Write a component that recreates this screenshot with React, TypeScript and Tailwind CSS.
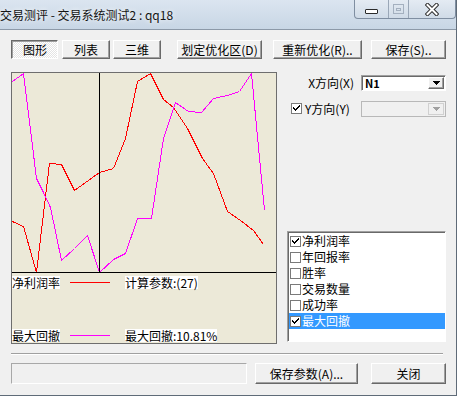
import React from "react";

const red: [number, number][] = [
  [0, 148], [11, 153], [24, 199], [31, 140], [37, 90], [49, 91], [62, 117], [87, 99], [101, 95],
  [113, 65], [125, 8], [138, 0], [151, 26], [161, 34], [175, 55], [190, 85], [201, 100],
  [215, 138], [228, 147], [241, 157], [251, 171],
];
const mag: [number, number][] = [
  [0, 8], [11, 0], [24, 105], [31, 119], [38, 134], [49, 187], [62, 175], [75, 162], [87, 199],
  [101, 186], [113, 180], [125, 145], [139, 145], [151, 65], [163, 29], [176, 38], [189, 39],
  [201, 25], [215, 22], [227, 18], [239, 0], [252, 137],
];
const pts = (a: [number, number][]) => a.map(([x, y]) => `${x + 0.5},${y + 0.5}`).join(" ");

function Btn({ children, className = "" }: { children: React.ReactNode; className?: string }) {
  return (
    <div
      className={
        "flex items-center justify-center bg-[#f0f0f0] border border-t-white border-l-white border-r-[#696969] border-b-[#696969] shadow-[inset_-1px_-1px_0_#a0a0a0] text-[12px] leading-none text-black whitespace-nowrap " +
        className
      }
    >
      {children}
    </div>
  );
}

function Check({ on }: { on: boolean }) {
  return (
    <div className="w-[11px] h-[11px] shrink-0 bg-white border border-[#7a7a7a] flex items-center justify-center">
      {on && (
        <svg width="9" height="9" viewBox="0 0 9 9" shapeRendering="crispEdges">
          <path d="M1 3h1v1h1v1h1v-1h1v-1h1v-1h1v-1h1v2h-1v1h-1v1h-1v1h-1v1h-1v-1h-1v-1h-1z" fill="#000" />
        </svg>
      )}
    </div>
  );
}

function Arrow({ color }: { color: string }) {
  return (
    <svg width="7" height="4" viewBox="0 0 7 4" shapeRendering="crispEdges">
      <path d="M0 0h7v1h-1v1h-1v1h-1v1h-1v-1h-1v-1h-1v-1h-1z" fill={color} />
    </svg>
  );
}

const items = [
  { t: "净利润率", on: true },
  { t: "年回报率", on: false },
  { t: "胜率", on: false },
  { t: "交易数量", on: false },
  { t: "成功率", on: false },
  { t: "最大回撤", on: true, sel: true },
];

export default function App() {
  return (
    <div className="w-[457px] h-[396px] overflow-hidden bg-[#f0f0f0] flex flex-col border-r border-b border-[#5f6b78] font-['Noto_Sans_CJK_SC',sans-serif] text-[12px] text-black">
      {/* title bar */}
      <div className="h-[30px] shrink-0 flex items-start bg-[linear-gradient(to_bottom,#dbe5f0,#c8d6e5)] border-b border-[#8c99a8]">
        <div className="h-[29px] flex items-center text-[12px] text-[#141414] whitespace-nowrap [text-shadow:0_0_5px_#ffffff]">
          交易测评 - 交易系统测试2 : qq18
        </div>
        <div className="ml-auto mr-0 flex h-[19px] border border-t-0 border-[#7f8ea1] rounded-b-[4px] overflow-hidden bg-[linear-gradient(to_bottom,#e4ebf3,#d0dbe7)]">
          <div className="w-[34px] flex items-center justify-center border-r border-[#9aa7b7]">
            <div className="w-[13px] h-[5px] bg-white border border-[#2b2b2b] rounded-[1px] mt-[4px]" />
          </div>
          <div className="w-[20px] flex items-center justify-center border-r border-[#9aa7b7]">
            <div className="w-[11px] h-[10px] border border-[#a4b0bf] flex items-center justify-center">
              <div className="w-[5px] h-[3px] border border-[#a4b0bf]" />
            </div>
          </div>
          <div className="w-[46px] flex items-center justify-center">
            <svg width="14" height="13" viewBox="0 0 14 13">
              <path d="M2.5 2 L11.5 11 M11.5 2 L2.5 11" stroke="#2e2e2e" strokeWidth="4" strokeLinecap="square" />
              <path d="M2.5 2 L11.5 11 M11.5 2 L2.5 11" stroke="#ffffff" strokeWidth="2" strokeLinecap="square" />
            </svg>
          </div>
        </div>
      </div>

      {/* client */}
      <div className="flex flex-col pl-[11px] pt-[10px]">
        {/* row 1 */}
        <div className="flex h-[19px]">
          <div className="w-[47px] flex items-center justify-center border border-t-[#696969] border-l-[#696969] border-r-white border-b-white shadow-[inset_1px_1px_0_#a0a0a0] bg-[repeating-conic-gradient(#ffffff_0%_25%,#e4e4e4_0%_50%)] bg-size-[2px_2px] leading-none pt-[1px] pl-[1px]">
            图形
          </div>
          <Btn className="w-[48px] ml-[4px]">列表</Btn>
          <Btn className="w-[48px] ml-[3px]">三维</Btn>
          <Btn className="w-[85px] ml-[16px]">划定优化区(D)</Btn>
          <Btn className="w-[89px] ml-[11px]">重新优化(R)..</Btn>
          <Btn className="w-[75px] ml-[9px]">保存(S)..</Btn>
        </div>

        {/* main */}
        <div className="flex mt-[13px]">
          {/* chart */}
          <div className="w-[266px] h-[272px] border border-[#6e6e6e] bg-[#ece9d8] flex flex-col">
            <svg width="264" height="200" viewBox="0 0 264 200" shapeRendering="crispEdges" className="block">
              <polyline points={pts(red)} fill="none" stroke="#ff0000" strokeWidth="1" />
              <polyline points={pts(mag)} fill="none" stroke="#ff00ff" strokeWidth="1" />
              <line x1="87.5" y1="0" x2="87.5" y2="200" stroke="#000" strokeWidth="1" />
              <line x1="0" y1="199.5" x2="264" y2="199.5" stroke="#000" strokeWidth="1" />
            </svg>
            <div className="flex items-center h-[14px] mt-[2px]">
              <span className="bg-white leading-[13px]">净利润率</span>
              <div className="w-[40px] h-px bg-[#ff0000] ml-[10px]" />
              <span className="bg-white leading-[13px] ml-[15px]">计算参数:(27)</span>
            </div>
            <div className="flex items-center h-[14px] mt-[39px]">
              <span className="bg-white leading-[13px]">最大回撤</span>
              <div className="w-[40px] h-px bg-[#ff00ff] ml-[10px]" />
              <span className="bg-white leading-[13px] ml-[15px]">最大回撤:10.81%</span>
            </div>
          </div>

          {/* right panel */}
          <div className="w-[159px] ml-[10px] flex flex-col">
            <div className="flex items-center h-[16px] mt-[3px]">
              <div className="w-[67px] text-right whitespace-nowrap leading-none">X方向(X)</div>
              <div className="w-[85px] h-[16px] ml-[7px] bg-white border border-t-[#a0a0a0] border-l-[#a0a0a0] border-r-white border-b-white shadow-[inset_1px_1px_0_#696969] flex items-center">
                <span className="font-bold pl-[3px] leading-none text-[11px] flex-1">N1</span>
                <div className="w-[16px] h-[12px] mr-[1px] bg-[#f0f0f0] border border-t-white border-l-white border-r-[#696969] border-b-[#696969] shadow-[inset_-1px_-1px_0_#a0a0a0] flex items-center justify-center">
                  <Arrow color="#000" />
                </div>
              </div>
            </div>
            <div className="flex items-center h-[15px] mt-[10px]">
              <div className="ml-[4px]">
                <Check on={true} />
              </div>
              <div className="ml-[3px] w-[49px] whitespace-nowrap leading-none">Y方向(Y)</div>
              <div className="w-[85px] h-[16px] ml-[7px] bg-[#f0f0f0] border border-[#b8b8b8] flex items-center justify-end">
                <div className="w-[16px] h-[12px] mr-[1px] border border-[#d0d0d0] flex items-center justify-center">
                  <Arrow color="#a0a0a0" />
                </div>
              </div>
            </div>
            <div className="mt-[115px] h-[111px] bg-white border border-t-[#a0a0a0] border-l-[#a0a0a0] border-r-white border-b-white shadow-[inset_1px_1px_0_#696969] pt-[1px] pl-[1px] flex flex-col">
              {items.map((it) => (
                <div
                  key={it.t}
                  className={
                    "flex items-center h-[16px] pl-[1px] " + (it.sel ? "bg-[#3399ff] text-white" : "text-black")
                  }
                >
                  <Check on={it.on} />
                  <span className="ml-[1px] text-[12px] leading-none">{it.t}</span>
                </div>
              ))}
            </div>
          </div>
        </div>

        {/* separator */}
        <div className="w-[432px] mt-[9px] border-t border-[#a0a0a0] border-b border-b-white" />

        {/* bottom row */}
        <div className="flex mt-[8px] h-[21px]">
          <div className="w-[236px] h-[21px] border border-t-[#a8a8a8] border-l-[#a8a8a8] border-r-white border-b-white bg-[#f0f0f0]" />
          <Btn className="w-[103px] h-[21px] ml-[8px]">保存参数(A)...</Btn>
          <Btn className="w-[75px] h-[21px] ml-[13px]">关闭</Btn>
        </div>
      </div>
    </div>
  );
}
